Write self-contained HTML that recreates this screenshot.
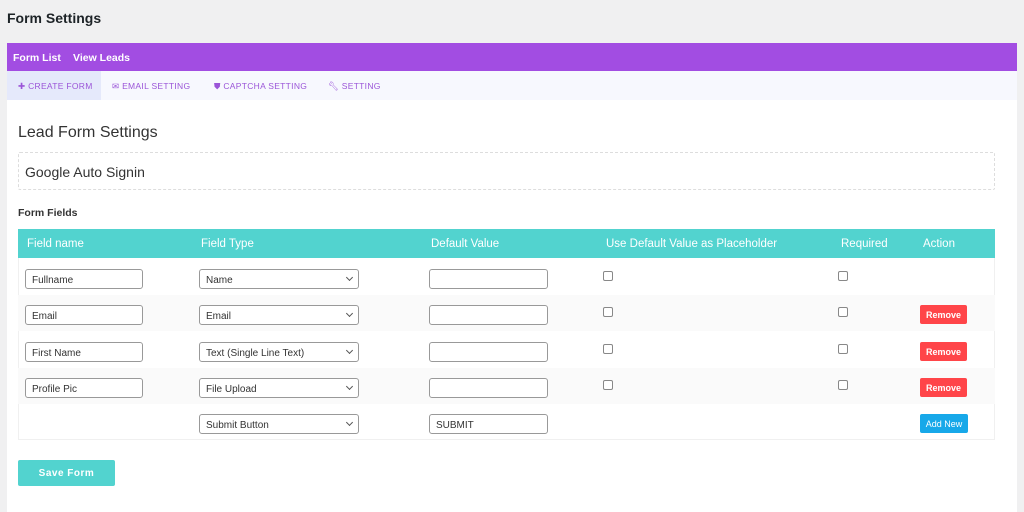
<!DOCTYPE html><html><head><style>
*{box-sizing:border-box;margin:0;padding:0}
body{width:1024px;height:512px;background:#f0f0f1;font-family:"Liberation Sans",sans-serif;position:relative;overflow:hidden;color:#333}
.a{position:absolute}
.inp{position:absolute;height:20px;border:1px solid #999;border-radius:3px;background:#fff;font-size:10px;padding:5px 6px 0;color:#333}
.sel::after{content:"";position:absolute;right:6px;top:5px;width:4px;height:4px;border-right:1.3px solid #555;border-bottom:1.3px solid #555;transform:rotate(45deg)}
.cb{position:absolute;width:10px;height:10px;border:1px solid #888;border-radius:2px;background:#fff}
.btn{position:absolute;height:19px;border-radius:2px;color:#fff;font-size:9px;font-weight:bold;text-align:center;line-height:20px}
.th{position:absolute;top:238px;color:#fff;font-size:11.5px}
.tab{position:absolute;top:81px;font-size:8.5px;letter-spacing:.3px;color:#9b55d8}
</style></head><body>
<div class="a" style="left:7px;top:10px;font-size:14px;font-weight:bold;color:#1d2327">Form Settings</div>
<div class="a" style="left:7px;top:43px;width:1010px;height:28px;background:#a24de2"></div>
<div class="a" style="left:13px;top:52px;font-size:10.5px;font-weight:bold;color:#fff">Form List</div>
<div class="a" style="left:73px;top:52px;font-size:10.5px;font-weight:bold;color:#fff">View Leads</div>
<div class="a" style="left:7px;top:71px;width:1010px;height:29px;background:#f7f8fe"></div>
<div class="a" style="left:7px;top:71px;width:94px;height:29px;background:#e5e9fb"></div>
<div class="tab" style="left:18px">✚ CREATE FORM</div>
<div class="tab" style="left:112px">✉ EMAIL SETTING</div>
<div class="tab" style="left:214px">⛊ CAPTCHA SETTING</div>
<div class="tab" style="left:328px">🔧︎ SETTING</div>
<div class="a" style="left:7px;top:100px;width:1010px;height:412px;background:#fff"></div>
<div class="a" style="left:18px;top:124px;font-size:16px;color:#333">Lead Form Settings</div>
<div class="a" style="left:18px;top:152px;width:977px;height:38px;border:1px dashed #ddd;border-radius:2px;font-size:14px;padding:11px 6px;color:#333">Google Auto Signin</div>
<div class="a" style="left:18px;top:207px;font-size:10.5px;font-weight:bold;color:#333">Form Fields</div>
<div class="a" style="left:18px;top:229px;width:977px;height:29px;background:#52d3cf"></div>
<div class="th" style="left:27px">Field name</div><div class="th" style="left:201px">Field Type</div><div class="th" style="left:431px">Default Value</div><div class="th" style="left:606px">Use Default Value as Placeholder</div><div class="th" style="left:841px">Required</div><div class="th" style="left:923px">Action</div>
<div class="a" style="left:18px;top:258px;width:977px;height:182px;border:1px solid #f0f0f0;border-top:none"></div>
<div class="a" style="left:18px;top:295px;width:977px;height:36px;background:#fafafa"></div>
<div class="a" style="left:18px;top:368px;width:977px;height:36px;background:#fafafa"></div>
<div class="inp" style="left:25px;top:269px;width:118px">Fullname</div>
<div class="inp sel" style="left:199px;top:269px;width:160px">Name</div>
<div class="inp" style="left:429px;top:269px;width:119px"></div>
<div class="cb" style="left:603px;top:271px"></div><div class="cb" style="left:838px;top:271px"></div>

<div class="inp" style="left:25px;top:305px;width:118px">Email</div>
<div class="inp sel" style="left:199px;top:305px;width:160px">Email</div>
<div class="inp" style="left:429px;top:305px;width:119px"></div>
<div class="cb" style="left:603px;top:307px"></div><div class="cb" style="left:838px;top:307px"></div>
<div class="btn" style="left:920px;top:305px;width:47px;background:#ff4549">Remove</div>

<div class="inp" style="left:25px;top:342px;width:118px">First Name</div>
<div class="inp sel" style="left:199px;top:342px;width:160px">Text (Single Line Text)</div>
<div class="inp" style="left:429px;top:342px;width:119px"></div>
<div class="cb" style="left:603px;top:344px"></div><div class="cb" style="left:838px;top:344px"></div>
<div class="btn" style="left:920px;top:342px;width:47px;background:#ff4549">Remove</div>

<div class="inp" style="left:25px;top:378px;width:118px">Profile Pic</div>
<div class="inp sel" style="left:199px;top:378px;width:160px">File Upload</div>
<div class="inp" style="left:429px;top:378px;width:119px"></div>
<div class="cb" style="left:603px;top:380px"></div><div class="cb" style="left:838px;top:380px"></div>
<div class="btn" style="left:920px;top:378px;width:47px;background:#ff4549">Remove</div>

<div class="inp sel" style="left:199px;top:414px;width:160px">Submit Button</div>
<div class="inp" style="left:429px;top:414px;width:119px">SUBMIT</div>
<div class="btn" style="left:920px;top:414px;width:48px;background:#17a8e9;font-weight:normal">Add New</div>

<div class="btn" style="left:18px;top:460px;width:97px;height:26px;line-height:27px;background:#52d3cf;font-size:10px;letter-spacing:.5px">Save Form</div>
</body></html>
